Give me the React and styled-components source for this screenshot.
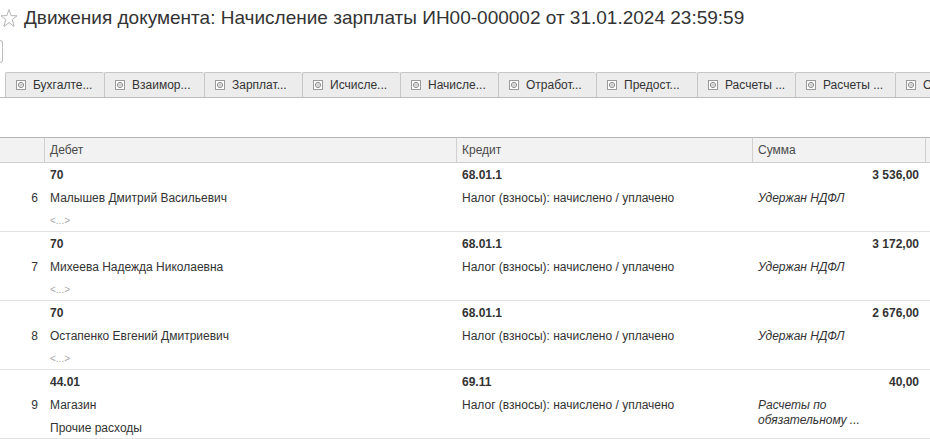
import React from 'react';
import styled, { createGlobalStyle } from 'styled-components';

const GlobalStyle = createGlobalStyle`
  body {
    margin: 0;
    background: #fff;
    font-family: 'Liberation Sans', Arial, sans-serif;
    color: #333;
    overflow: hidden;
  }
`;

const Page = styled.div`
  width: 930px;
  height: 439px;
  overflow: hidden;
`;

const TitleBar = styled.div`
  display: flex;
  align-items: center;
  height: 36px;
  gap: 6px;
`;

const Title = styled.h1`
  margin: 0;
  font-size: 19px;
  font-weight: normal;
  color: #333;
  white-space: nowrap;
`;

const Toolbar = styled.div`
  height: 22px;
  margin-top: 4px;
  display: flex;
`;

const StubButton = styled.div`
  width: 2px;
  height: 21px;
  border: 1px solid #bdbdbd;
  border-left: none;
  border-radius: 0 3px 3px 0;
`;

const TabStrip = styled.div`
  display: flex;
  margin-top: 10px;
  padding-left: 5px;
  border-bottom: 1px solid #bcbcbc;
  overflow: hidden;
`;

const Tab = styled.div`
  flex: 0 0 auto;
  width: ${p => p.$w}px;
  height: 25px;
  box-sizing: border-box;
  display: flex;
  align-items: center;
  gap: 7px;
  padding-left: 10px;
  background: #ececec;
  border: 1px solid #c6c6c6;
  border-bottom: none;
  border-right: none;
  border-radius: 2px 2px 0 0;
  font-size: 12px;
  color: #333;
  white-space: nowrap;
`;

const Grid = styled.div`
  margin-top: 39px;
  display: grid;
  grid-template-columns: 44px 412px 296px 173px 1fr;
`;

const HeadCell = styled.div`
  height: 24px;
  background: #f2f2f2;
  border-top: 1px solid #b4b4b4;
  border-bottom: 1px solid #cfcfcf;
  border-left: ${p => (p.$first ? 'none' : '1px solid #d0d0d0')};
  display: flex;
  align-items: center;
  padding-left: 5px;
  font-size: 12px;
  color: #4a4a4a;
`;

const Cell = styled.div`
  display: flex;
  flex-direction: column;
  box-sizing: border-box;
  height: 69px;
  overflow: hidden;
  border-bottom: 1px solid #e3e3e3;
  padding: 1px 6px 0;
`;

const Line = styled.div`
  height: 23px;
  flex: 0 0 23px;
  line-height: 23px;
  font-size: 12px;
  color: #333;
  white-space: nowrap;
  text-align: ${p => (p.$right ? 'right' : 'left')};
  font-weight: ${p => (p.$bold ? 'bold' : 'normal')};
  font-style: ${p => (p.$italic ? 'italic' : 'normal')};
`;

const Muted = styled.div`
  height: 22px;
  line-height: 22px;
  font-size: 10px;
  color: #a8a8a8;
`;

const Wrapped = styled.div`
  padding-top: 4px;
  font-size: 12px;
  line-height: 15px;
  font-style: italic;
  color: #333;
`;

const NumCell = styled(Cell)`
  align-items: flex-end;
  justify-content: center;
  padding: 2px 6px 0 0;
  font-size: 12px;
`;

const Star = () => (
  <svg width="18" height="20" viewBox="0 0 17 20">
    <path
      d="M8.5 1.5 L10.6 7.6 L16.5 7.8 L11.8 11.6 L13.5 18.5 L8.5 14.6 L3.5 18.5 L5.2 11.6 L0.5 7.8 L6.4 7.6 Z"
      fill="none"
      stroke="#b4b4b4"
      strokeWidth="1"
      strokeLinejoin="round"
    />
  </svg>
);

const TabIcon = () => (
  <svg width="10" height="10" viewBox="0 0 10 10">
    <rect x="0.5" y="0.5" width="9" height="9" fill="#fff" stroke="#9a9a9a" />
    <circle cx="5" cy="5" r="2.6" fill="none" stroke="#8a8a8a" strokeWidth="1" />
    <path d="M3 5 H7 M5 3.2 V6.8" stroke="#b0b0b0" strokeWidth="0.8" />
  </svg>
);

const tabs = [
  ['Бухгалте...', 99],
  ['Взаимор...', 100],
  ['Зарплат...', 98],
  ['Исчисле...', 98],
  ['Начисле...', 98],
  ['Отработ...', 98],
  ['Предост...', 101],
  ['Расчеты ...', 98],
  ['Расчеты ...', 100],
  ['Отражен...', 99],
];

const rows = [
  { n: 6, dt: '70', dtSub: 'Малышев Дмитрий Васильевич', dtExtra: '<...>', kt: '68.01.1', ktSub: 'Налог (взносы): начислено / уплачено', sum: '3 536,00', note: 'Удержан НДФЛ' },
  { n: 7, dt: '70', dtSub: 'Михеева Надежда Николаевна', dtExtra: '<...>', kt: '68.01.1', ktSub: 'Налог (взносы): начислено / уплачено', sum: '3 172,00', note: 'Удержан НДФЛ' },
  { n: 8, dt: '70', dtSub: 'Остапенко Евгений Дмитриевич', dtExtra: '<...>', kt: '68.01.1', ktSub: 'Налог (взносы): начислено / уплачено', sum: '2 676,00', note: 'Удержан НДФЛ' },
  { n: 9, dt: '44.01', dtSub: 'Магазин', dtText: 'Прочие расходы', kt: '69.11', ktSub: 'Налог (взносы): начислено / уплачено', sum: '40,00', wrapNote: ['Расчеты по', 'обязательному ...'] },
];

export default function App() {
  return (
    <Page>
      <GlobalStyle />
      <TitleBar>
        <Star />
        <Title>Движения документа: Начисление зарплаты ИН00-000002 от 31.01.2024 23:59:59</Title>
      </TitleBar>
      <Toolbar>
        <StubButton />
      </Toolbar>
      <TabStrip>
        {tabs.map(([label, w], i) => (
          <Tab key={i} $w={w}>
            <TabIcon />
            {label}
          </Tab>
        ))}
      </TabStrip>
      <Grid>
        <HeadCell $first />
        <HeadCell>Дебет</HeadCell>
        <HeadCell>Кредит</HeadCell>
        <HeadCell>Сумма</HeadCell>
        <HeadCell />
        {rows.map(r => (
          <React.Fragment key={r.n}>
            <NumCell>{r.n}</NumCell>
            <Cell>
              <Line $bold>{r.dt}</Line>
              <Line>{r.dtSub}</Line>
              {r.dtExtra ? <Muted>{r.dtExtra}</Muted> : <Line>{r.dtText}</Line>}
            </Cell>
            <Cell>
              <Line $bold>{r.kt}</Line>
              <Line>{r.ktSub}</Line>
            </Cell>
            <Cell>
              <Line $bold $right>{r.sum}</Line>
              {r.note && <Line $italic>{r.note}</Line>}
              {r.wrapNote && (
                <Wrapped>
                  {r.wrapNote[0]}
                  <br />
                  {r.wrapNote[1]}
                </Wrapped>
              )}
            </Cell>
            <Cell />
          </React.Fragment>
        ))}
      </Grid>
    </Page>
  );
}
